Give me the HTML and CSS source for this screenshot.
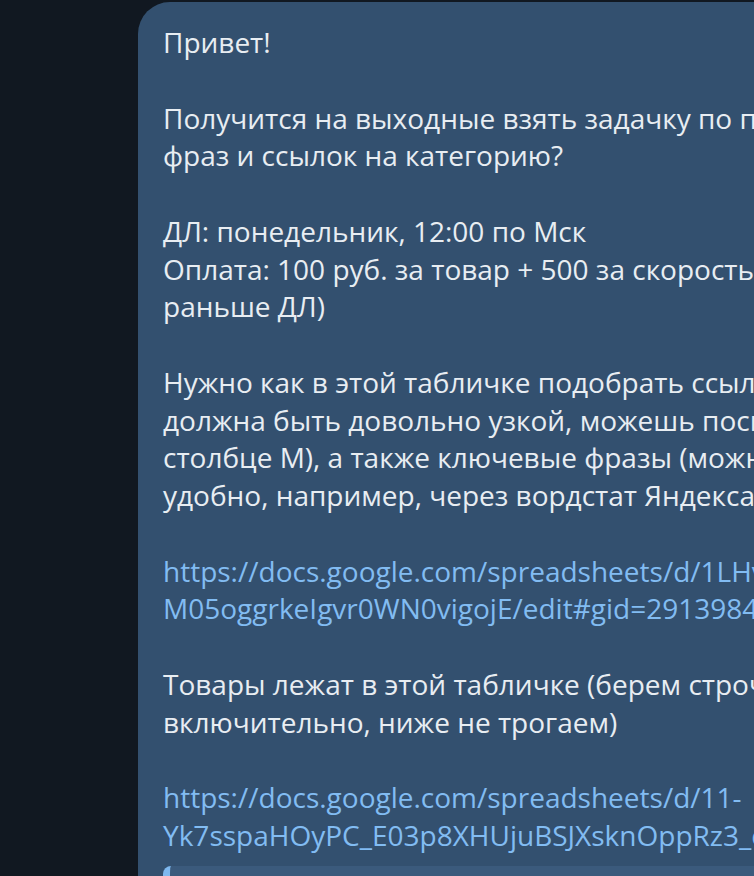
FILE: index.html
```html
<!DOCTYPE html>
<html lang="ru">
<head>
<meta charset="utf-8">
<link rel="stylesheet" href="styles.css">
</head>
<body>
<div class="chat">
  <div class="bubble">
    <div class="text">Привет!<br><br>Получится на выходные взять задачку по подбору<br>фраз и ссылок на категорию?<br><br>ДЛ: понедельник, 12:00 по Мск<br>Оплата: 100 руб. за товар + 500 за скорость (если<br>раньше ДЛ)<br><br>Нужно как в этой табличке подобрать ссылку<br>должна быть довольно узкой, можешь посмотреть<br>столбце М), а также ключевые фразы (можно<br>удобно, например, через вордстат Яндекса)<br><br><a class="link" href="#">https://docs.google.com/spreadsheets/d/1LHvQx7kP2-<br>M05oggrkeIgvr0WN0vigojE/edit#gid=291398451</a><br><br>Товары лежат в этой табличке (берем строчки до<br>включительно, ниже не трогаем)<br><br><a class="link" href="#">https://docs.google.com/spreadsheets/d/11-<br>Yk7sspaHOyPC_E03p8XHUjuBSJXsknOppRz3_c/edit</a></div>
    <div class="preview"></div>
  </div>
</div>
</body>
</html>
```

FILE: styles.css
```css
html, body {
  margin: 0;
  padding: 0;
  background: #111821;
  overflow: hidden;
  height: 100%;
}
.chat {
  padding: 2px 0 0 138px;
}
.bubble {
  width: 900px;
  background: #33506f;
  border-radius: 32px 0 0 0;
  padding: 22px 0 0 25px;
  height: 900px;
  box-sizing: border-box;
}
.text {
  font-family: "Open Sans", sans-serif;
  font-size: 28px;
  line-height: 37.75px;
  color: #e8edf2;
  white-space: nowrap;
}
.link {
  color: #82bcf2;
  text-decoration: none;
}
.preview {
  margin-top: 11px;
  height: 60px;
  border-left: 7px solid #7eb8ef;
  border-radius: 8px 0 0 0;
  background: #3b5a7c;
}
```
